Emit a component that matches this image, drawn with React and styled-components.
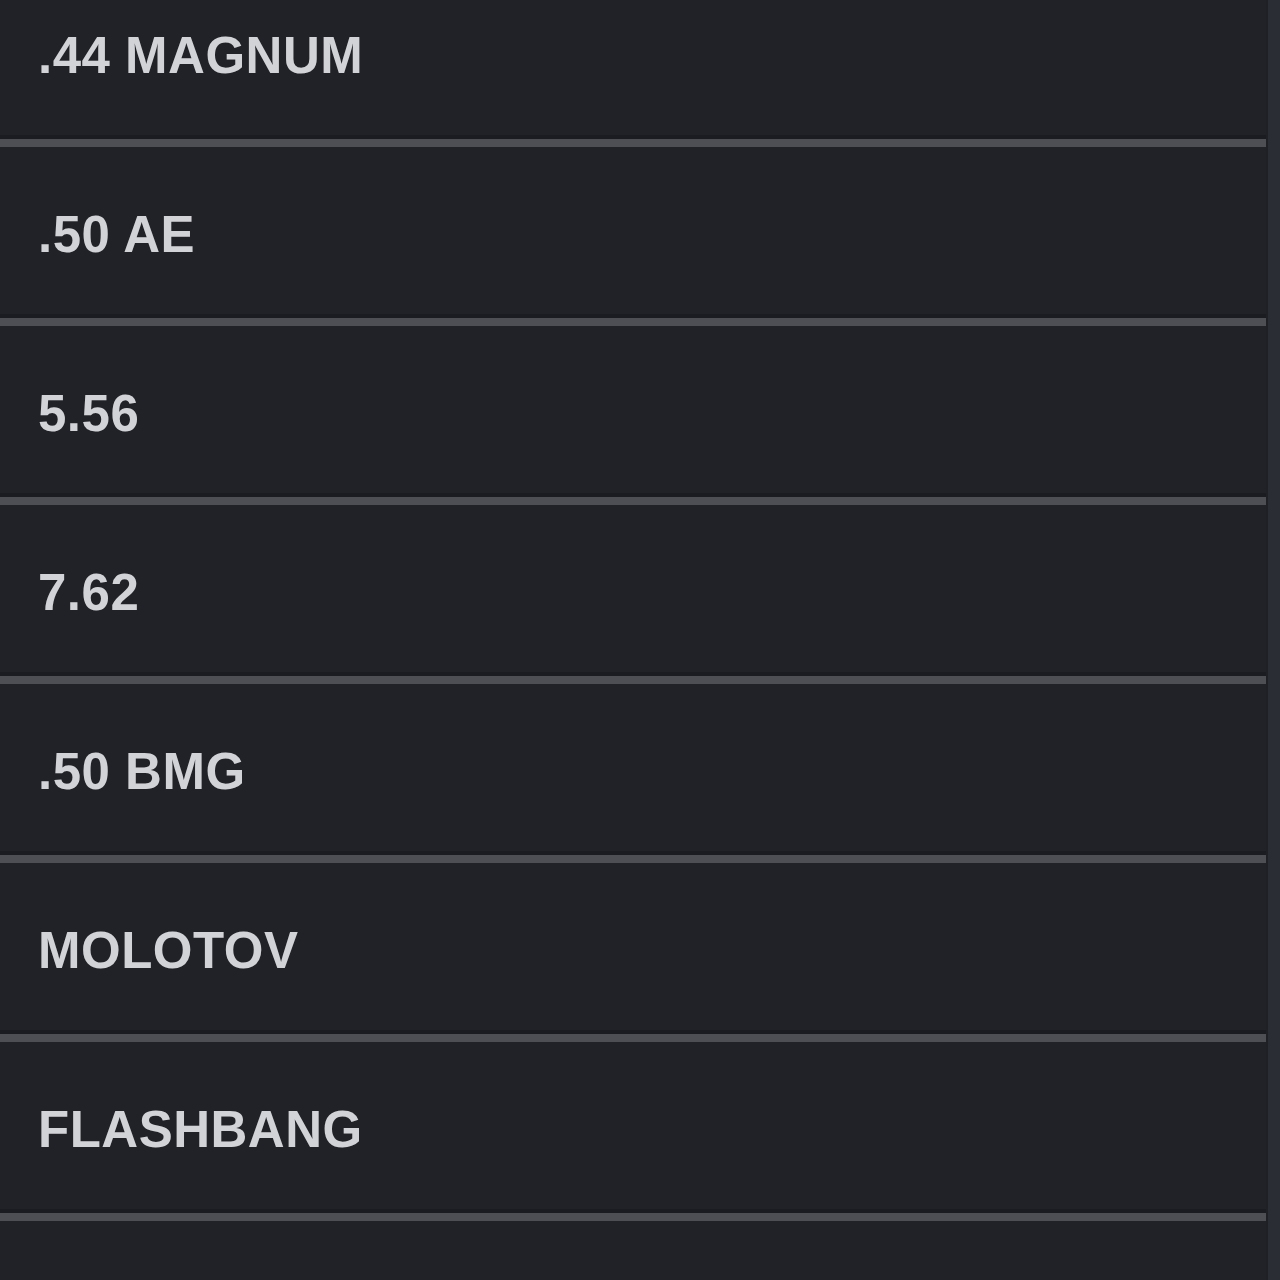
import React from 'react';
import styled, { createGlobalStyle } from 'styled-components';

const items = [
  '.44 MAGNUM',
  '.50 AE',
  '5.56',
  '7.62',
  '.50 BMG',
  'MOLOTOV',
  'FLASHBANG',
  'SMOKE',
];

const GlobalStyle = createGlobalStyle`
  html, body {
    margin: 0;
    padding: 0;
    background: #212228;
    overflow: hidden;
  }
`;

const Screen = styled.div`
  width: 1280px;
  height: 1280px;
  display: flex;
  overflow: hidden;
  background: #212228;
`;

const List = styled.div`
  flex: 1;
  display: flex;
  flex-direction: column;
  margin-top: -32px;
`;

const Row = styled.div`
  height: 171px;
  flex-shrink: 0;
  display: flex;
  align-items: center;
  padding: 4px 0 0 38px;
  box-sizing: border-box;
  background: #212228;
`;

const Label = styled.span`
  font-family: 'Liberation Sans', Arial, sans-serif;
  font-weight: 700;
  font-size: 51px;
  letter-spacing: 0.5px;
  color: #d2d3d6;
  text-transform: uppercase;
`;

const Divider = styled.div`
  height: 8px;
  flex-shrink: 0;
  background: #4d4f55;
  box-shadow: 0 -4px 0 #1b1c21, 0 4px 0 #2b2d33;
`;

const Track = styled.div`
  width: 12px;
  background: #2a2d34;
  border-left: 2px solid #1e2026;
`;

export default function App() {
  return (
    <Screen>
      <GlobalStyle />
      <List>
        {items.map((name, i) => (
          <React.Fragment key={name}>
            <Row>
              <Label>{name}</Label>
            </Row>
            {i < items.length - 1 && <Divider />}
          </React.Fragment>
        ))}
      </List>
      <Track />
    </Screen>
  );
}
